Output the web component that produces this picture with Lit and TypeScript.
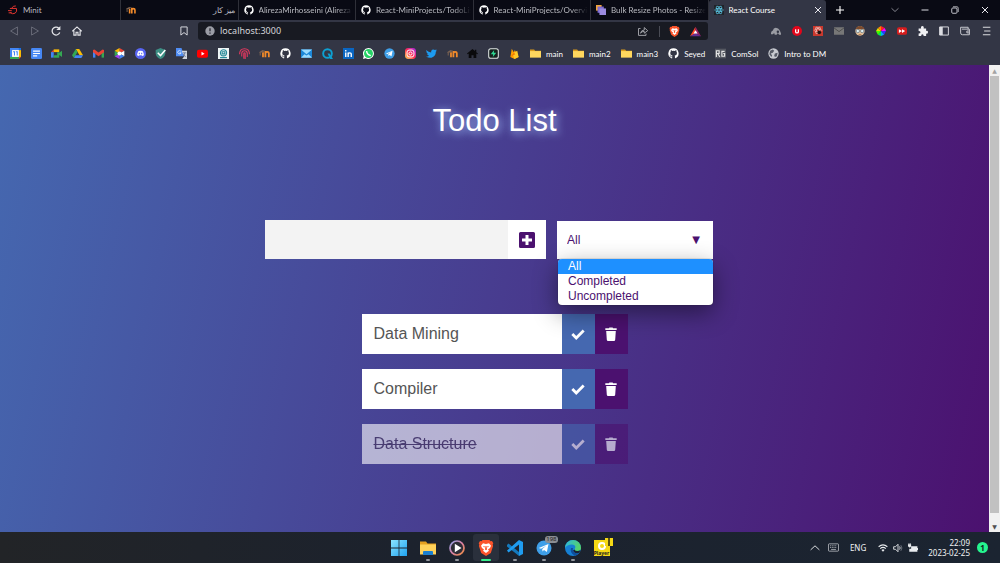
import { LitElement, html, css, svg, nothing } from "lit";
import { customElement, property, state } from "lit/decorators.js";
import { classMap } from "lit/directives/class-map.js";

const github = svg`<path fill="#fff" d="M8 .5a7.500 7.500 0 0 0-2.400 14.600c.4.1.5-.2.5-.4v-1.500c-2 .5-2.500-.9-2.500-.9-.4-.9-.9-1.100-.9-1.100-.7-.5.1-.5.1-.5.800.1 1.200.8 1.200.8.700 1.200 1.800.9 2.200.7.1-.5.3-.9.5-1.100-1.700-.2-3.400-.8-3.400-3.700 0-.8.3-1.500.8-2-.1-.2-.4-1 .1-2 0 0 .6-.2 2.100.8a7 7 0 0 1 3.800 0c1.400-1 2-.8 2-.8.5 1 .2 1.800.1 2 .5.500.8 1.200.8 2 0 2.900-1.700 3.500-3.400 3.700.3.200.5.700.5 1.400v2.100c0 .2.100.5.500.4A7.500 7.500 0 0 0 8 .5z"/>`;
const moodle = svg`<path fill="none" stroke="#f28a2a" stroke-width="2.600" d="M5.800 13.500V6M9.300 13.500V4.500M9.300 8q0-2.300 2.500-2.300t2.500 2.300v5.500"/><path fill="#7a6252" d="M0 6l5-3 4 1-4 2.500H2.500V11H1V7z"/>`;
const folder = svg`<path fill="#d99a1c" d="M0 2h6l1.500 2H16V13H0z"/><path fill="#ffd75e" d="M0 4.500h16v9.500H0z"/>`;
const brave = svg`<path fill="#fb542b" d="M4.500 0h7l1 1.300 1.500-.2 1.300 2.200-.6 1.300.4 1.300-2.300 7L8 16l-4.800-3.100-2.300-7 .4-1.300L.700 3.300 2 1.100l1.500.2z"/><path fill="#fff" d="M5 3.200l3 .7 3-.7 2 2.500-1 2.300-2 1.600 1 1.100L8 13l-3-2.300 1-1.100L4 8 3 5.700z"/><path fill="#fb542b" d="M5 6l2 .5-.8 1zM11 6l-2 .5.800 1zM7.500 6h1l.5 3.500-1 .7-1-.7z"/>`;
const telegram = svg`<circle cx="8" cy="8" r="7.500" fill="#3f9fe8"/><path fill="#fff" d="M2.800 8L12.500 4l-1.600 8-2.900-2-1.500 1.500L6.200 9l4-3.200L5 8.800z"/>`;

const icons: Record<string, unknown> = {
  github, moodle, folder, brave, telegram,
  minit: svg`<g fill="none" stroke="#e0352f" stroke-width="1.600"><path d="M3 5.500h10.500q1.500 5-2 7.500-4 2.500-8-1"/><path d="M6 5Q8 1 12.500 1.500M0 9h6M1 12.500h5"/></g>`,
  resize: svg`<path fill="#f2a53c" d="M0 0h9v9H0z"/><path fill="#7d6bd0" d="M2.500 2.500h10v10h-10z"/><path fill="#9b8ae0" d="M5.500 5.500H16V16H5.500z"/>`,
  react: svg`<path fill="#20232a" d="M0 0h16v16H0z"/><g fill="none" stroke="#61dafb"><ellipse cx="8" cy="8" rx="7" ry="2.700"/><ellipse cx="8" cy="8" rx="7" ry="2.700" transform="rotate(60 8 8)"/><ellipse cx="8" cy="8" rx="7" ry="2.700" transform="rotate(120 8 8)"/></g><circle cx="8" cy="8" r="1.300" fill="#61dafb"/>`,
  calendar: svg`<path fill="#4285f4" d="M0 0h13v3H3v10H0z"/><path fill="#fbbc04" d="M13 3h3v10h-3z"/><path fill="#1a73e8" d="M13 0h3v3h-3z"/><path fill="#34a853" d="M0 13h13v3H0z"/><path fill="#ea4335" d="M13 13h3l-3 3z"/><path fill="#fff" d="M3 3h10v10H3z"/><path fill="none" stroke="#4285f4" stroke-width="1.500" d="M4.500 5.500h2V11M8.500 5.500h2V11"/>`,
  doc: svg`<rect width="16" height="16" rx="2" fill="#4687f4"/><path stroke="#fff" stroke-width="1.700" d="M3 4.500h10M3 8h10M3 11.500h6"/>`,
  meet: svg`<path fill="#ea4335" d="M0 6l4-4v4z"/><path fill="#fbbc04" d="M4 2h8v4H4z"/><path fill="#4285f4" d="M0 6h4v8H0z"/><path fill="#34a853" d="M4 10.500h5V6h3v8H4zM12 7l4-3v9l-4-3z"/>`,
  drive: svg`<path fill="#fbbc04" d="M5.500 1.500h5L16 10.500h-5z"/><path fill="#34a853" d="M5.500 1.500L8 5.800 2.800 14.500 0 10.500z"/><path fill="#4285f4" d="M5 10.500h11l-2.500 4H2.800z"/>`,
  gmail: svg`<path fill="#4285f4" d="M0 4h3.500v10H0z"/><path fill="#34a853" d="M12.500 4H16v10h-3.500z"/><path fill="#ea4335" d="M0 3l2-1 6 4.500L14 2l2 1v3l-8 6-8-6z"/>`,
  photos: svg`<path fill="#ea4335" d="M8 0l7 4-7 4z"/><path fill="#fff" d="M15 4v8L8 8z"/><path fill="#4285f4" d="M15 12l-7 4V8z"/><path fill="#a142f4" d="M8 16l-7-4 7-4z"/><path fill="#34a853" d="M1 12V4l7 4z"/><path fill="#fbbc04" d="M1 4l7-4v8z"/><circle cx="8" cy="8" r="3" fill="#fff"/>`,
  discord: svg`<circle cx="8" cy="8" r="8" fill="#5865f2"/><path fill="#fff" d="M5 4.500q3-1 6 0 2 3 2 6l-2.500 1-1-1h-3l-1 1-2.500-1q0-3 2-6z"/><path fill="#5865f2" d="M5.500 7H7v2H5.500zM9 7h1.500v2H9z"/>`,
  shield: svg`<path fill="#3d8f84" d="M8 0l7 3v5q-1 6-7 8-6-2-7-8V3z"/><path fill="none" stroke="#fff" stroke-width="2.200" d="M4 7l4 4 7-8"/>`,
  translate: svg`<path fill="#4f8df5" d="M0 0h8l4 12H0z"/><path fill="#cfd4de" d="M8 4h8v12H9l3-4z"/><path fill="none" stroke="#fff" d="M7 4.500a2.500 2.500 0 1 0 .5 2.500H5"/><path stroke="#54668d" fill="none" d="M10 7h5M12.500 7q0 3-2 5M11 9l3 4"/>`,
  youtube: svg`<rect y="2.500" width="16" height="11.500" rx="2.500" fill="#f00"/><path fill="#fff" d="M6.500 5.500l4.500 2.700-4.500 2.800z"/>`,
  seal: svg`<path fill="#eef5f6" d="M0 0h16v16H0z"/><g fill="none" stroke="#278a99" stroke-width="1.600"><circle cx="8" cy="7" r="4.500"/><path d="M6 5.500h4v3H6zM3 14h10"/></g>`,
  fingerprint: svg`<g fill="none" stroke="#e0385f" stroke-width="1.600"><path d="M.8 9q0-8 7.200-8t7.200 8M4 12.500V8q0-4 4-4t4 4v5M7 15.500V8q0-1 1-1t1 1v8"/></g>`,
  mail: svg`<path fill="#1b87d8" d="M0 2h16v12H0z"/><path fill="#9bdcff" d="M0 2h16L8 9zM0 14l5-5 3 2 3-2 5 5z"/>`,
  quick: svg`<circle cx="8" cy="8" r="6.300" fill="none" stroke="#0da0d2" stroke-width="2.800"/><path fill="#0da0d2" d="M8 8h3l5 8h-4z"/>`,
  linkedin: svg`<path fill="#0a66c2" d="M0 0h16v16H0z"/><path fill="none" stroke="#fff" stroke-width="2" d="M4 6.500V13M4 3v2M7.500 13V6.500M7.500 9q0-2 2.300-2T12 9v4"/>`,
  whatsapp: svg`<path fill="#fff" d="M8 0a8 8 0 1 1-4 15l-4 1 1-4A8 8 0 0 1 8 0z"/><circle cx="8" cy="8" r="6.500" fill="#25d366"/><path fill="none" stroke="#fff" stroke-width="2" d="M5.300 4.500q0 5 6 6.500"/>`,
  instagram: svg`<defs><linearGradient id="ig" x1="0" y1="1" x2="1" y2="0"><stop stop-color="#fd5"/><stop offset=".5" stop-color="#ff2a55"/><stop offset="1" stop-color="#a02af0"/></linearGradient></defs><rect width="16" height="16" rx="5" fill="url(#ig)"/><g fill="none" stroke="#fff" stroke-width="1.400"><rect x="3" y="3" width="10" height="10" rx="3"/><circle cx="8" cy="8" r="2.300"/></g>`,
  twitter: svg`<path fill="#1d9bf0" d="M0 3q4 3.500 7.500 3.500Q7 2.500 10.500 2q1.500 0 2.500 1l2.500-.8L14.300 4l1.700-.4-1.700 2q0 7-6.300 8.400-4 .8-8-1.500 3 0 4.500-1.300Q2 10.500 1.700 8.800h1.300Q.5 7.500.8 5.500z"/>`,
  home2: svg`<path fill="#0a0a0c" d="M8 1.500L0 8l1 1 1.500-1v6.500h4v-4h3v4h4V8L15 9l1-1-2.500-2V2.500h-2v2z"/>`,
  bolt: svg`<rect x="1" y="1" width="14" height="14" rx="3" fill="#15201d" stroke="#dfe5e3" stroke-width="1.500"/><path fill="#2fd893" d="M9 3L4 9h3.500L7 13l5-6H8.500z"/>`,
  firebase: svg`<path fill="#ffa000" d="M2 13L4 1l3 5 1.500-3 5.500 10-6 3z"/><path fill="#ffca28" d="M5 8l7-4 2 9-6 3z"/><path fill="#f57c00" d="M2 13l5-7 2 3z"/>`,
  rg: svg`<path fill="#555861" d="M0 1h16v14H0z"/><path fill="none" stroke="#e5e5e5" stroke-width="1.700" d="M2 13V4h4v4H2m2 0l3 5M14 5h-4v7h4V8h-2"/>`,
  globe: svg`<circle cx="8" cy="8" r="7.500" fill="#c7cad0"/><path fill="#555a66" d="M3 4l4-2 2 2-2 3-3 1 2 3-1 2-3-4zM10 8l4-1-1 5-3 1-1-2z"/>`,
  tri: svg`<path fill="none" stroke="#6c6e7b" stroke-width="1.500" d="M13.500 1.500v13L2.500 8z"/>`,
  triRight: svg`<path fill="none" stroke="#6c6e7b" stroke-width="1.500" d="M2.500 1.500v13L13.500 8z"/>`,
  reload: svg`<path fill="none" stroke="#e5e6ea" stroke-width="2" d="M14 10.500A6.300 6.300 0 1 1 12.500 3.500"/><path fill="#e5e6ea" d="M15 0v6.500H8.500z"/>`,
  home: svg`<path fill="none" stroke="#e5e6ea" stroke-width="1.800" d="M.5 8.500L8 1.500l7.500 7M3 7v7.500h3.500v-4.500h3v4.500H13V7"/>`,
  bookmark: svg`<path fill="none" stroke="#d5d6dc" stroke-width="1.600" d="M3 1.500h10v13L8 10.500l-5 4z"/>`,
  info: svg`<circle cx="8" cy="8" r="7.500" fill="#9b9da5"/><path stroke="#24262f" stroke-width="2" d="M8 3.500v5M8 10.500v2"/>`,
  share: svg`<path fill="none" stroke="#a5a6ac" stroke-width="1.500" d="M4 4H.8v11h12v-3M4 11.500q1-5 6-5V2.500l5.500 5-5.500 4V8.500q-4 0-6 3z"/>`,
  bat: svg`<path fill="#ff4724" d="M8 1L0 15l8-4z"/><path fill="#9e1f63" d="M8 1l8 14-8-4z"/><path fill="#662d91" d="M0 15h16l-8-5z"/><path fill="#fff" d="M8 6l3 5H5z"/>`,
  cloud: svg`<path fill="#9a9ca3" d="M0 11q0-3 3-4 1-5 6-4 5 1 7 9v2h-3l-2-3-2 3H6l-1-3-2 2H0z"/><circle cx="11" cy="9" r="2" fill="#333645"/>`,
  ublock: svg`<circle cx="8" cy="8" r="8" fill="#e2061b"/><path fill="none" stroke="#fff" stroke-width="2" d="M5.800 5v4q0 2 2.200 2t2.200-2V5"/>`,
  bug: svg`<path fill="#c9382d" d="M0 0h16v16H0z"/><g fill="none" stroke="#f3c8c3"><ellipse cx="8" cy="7" rx="6" ry="2.500"/><ellipse cx="8" cy="7" rx="6" ry="2.500" transform="rotate(60 8 7)"/><ellipse cx="8" cy="7" rx="6" ry="2.500" transform="rotate(120 8 7)"/></g><circle cx="10" cy="10" r="3" fill="#20110f"/>`,
  mail2: svg`<path fill="#777" d="M0 2h16v12H0z"/><path fill="none" stroke="#4c4c4c" stroke-width="1.500" d="M0 3l8 6 8-6"/>`,
  face: svg`<circle cx="8" cy="8" r="7.500" fill="#e4c09a"/><path fill="#7c4a2c" d="M1 5q2-5 7-5t7 5z"/><g fill="#dff1f5" stroke="#567"><circle cx="4.500" cy="8" r="2.700"/><circle cx="11.500" cy="8" r="2.700"/></g><path fill="#a8693f" d="M5 13h6l-3 2z"/>`,
  wheel: svg`<path fill="#f22" d="M8 8V0l6 3z"/><path fill="#f0f" d="M8 8l6-5 2 5z"/><path fill="#33f" d="M8 8h8l-3 6z"/><path fill="#0af" d="M8 8l5 6-5 2z"/><path fill="#0e5" d="M8 8v8l-5-2z"/><path fill="#4f0" d="M8 8l-5 6-3-6z"/><path fill="#dd0" d="M8 8H0l3-5z"/><path fill="#f80" d="M8 8L3 3l5-3z"/>`,
  video: svg`<rect y="2" width="16" height="12" rx="3" fill="#d71d1d"/><path fill="#fff" d="M3 5l5 3-5 3zM8 5l5 3-5 3z"/>`,
  puzzle: svg`<path fill="#f0f0f3" d="M1 4h4q-1-4 2-4t2 4h4v4q3-1 3 2t-3 2v4H9q0-3-2-3t-2 3H1v-4q3 0 3-2T1 8z"/>`,
  panel: svg`<path fill="none" stroke="#dcdde2" stroke-width="1.500" d="M1 1.500h14v13H1z"/><path fill="#dcdde2" d="M1 1.500h5v13H1z"/>`,
  wallet: svg`<path fill="none" stroke="#cfd0d6" stroke-width="1.500" d="M13 5V2H1v9q0 3 3 3h11V5H3M15 8h-4v3h4"/>`,
  menu: svg`<path stroke="#e5e6ea" stroke-width="1.500" d="M3 2h12M5 8h10M3 14h12"/>`,
  close: svg`<path stroke="#e8e8ee" stroke-width="2" d="M2 2l12 12M14 2L2 14"/>`,
  plus: svg`<path stroke="#fff" stroke-width="2.200" d="M8 0v16M0 8h16"/>`,
  chevDown: svg`<path fill="none" stroke="#a9aab3" stroke-width="1.500" d="M1 4.500l7 6.500 7-6.500"/>`,
  chevUp: svg`<path fill="none" stroke="#e5e7ea" stroke-width="1.500" d="M1 11l7-6.500 7 6.500"/>`,
  minimise: svg`<path stroke="#e8e8ee" stroke-width="1.900" d="M1 8h14"/>`,
  restore: svg`<rect x="1.500" y="4" width="10.500" height="10.500" rx="2" fill="none" stroke="#d5d5dc" stroke-width="1.800"/><path fill="none" stroke="#d5d5dc" stroke-width="1.500" d="M4 1.500h8q2.500 0 2.500 3V12"/>`,
  square: svg`<path fill="#4b116f" fill-rule="evenodd" d="M1.500 0h13q1.500 0 1.500 1.500v13q0 1.500-1.500 1.500h-13Q0 16 0 14.500v-13Q0 0 1.500 0zM6.500 3v3.500H3v3h3.500V13h3V9.500H13v-3H9.500V3z"/>`,
  check: svg`<path fill="none" stroke="#fff" stroke-width="3.200" d="M1.500 8l4.500 4.500L14.500 4"/>`,
  trash: svg`<path fill="#fff" d="M1.500 1.500h4L6.200.5h3.600l.7 1h4v2h-13zM2.500 4.500h11l-.7 10q-.1 1.500-1.500 1.500H4.700q-1.400 0-1.500-1.500z"/>`,
  windows: svg`<defs><linearGradient id="wn" x2="1" y2="1"><stop stop-color="#8be4ff"/><stop offset="1" stop-color="#1ea2f0"/></linearGradient></defs><path fill="url(#wn)" d="M0 0h7.600v7.600H0zM8.400 0H16v7.600H8.400zM0 8.400h7.600V16H0zM8.400 8.400H16V16H8.400z"/>`,
  explorer: svg`<path fill="#e5a01f" d="M0 1.500h6l1.500 2H16V8H0z"/><path fill="#ffd25a" d="M0 4.500h16v10H0z"/><path fill="#1a7fd0" d="M3 15v-3q0-1 1-1h8q1 0 1 1v3z"/>`,
  media: svg`<defs><linearGradient id="md" x2="1" y2="1"><stop stop-color="#8ba2e8"/><stop offset=".5" stop-color="#d77fa4"/><stop offset="1" stop-color="#ef8c3c"/></linearGradient></defs><circle cx="8" cy="8" r="7" fill="#2c2c36" stroke="url(#md)" stroke-width="1.700"/><path fill="#fff" d="M5.800 3.800L12.500 8l-6.700 4.200z"/>`,
  vscode: svg`<path fill="#1479bd" d="M0 5l1.500-1.500L12 12v4L0 6.500z"/><path fill="#1f9cf0" d="M0 10.500L12 0l4 2v12l-4 2V4.500L1.500 12.500z"/>`,
  edge: svg`<defs><linearGradient id="ed" x2="1" y2=".3"><stop stop-color="#2cb5e0"/><stop offset="1" stop-color="#55d36b"/></linearGradient></defs><circle cx="8" cy="8" r="8" fill="#1680d4"/><path fill="url(#ed)" d="M0 8a8 8 0 0 1 16 0q0 3-3.500 3T9.500 9.500Q12 5 7 4.500 2 4.500 0 8z"/><path fill="#1b2230" d="M9.500 9.500q.5 1.500 3 1.500 2 0 3-1-.5 2-2 3.200-4 .8-5.500-2.200 0-1 1.500-1.500z"/><path fill="#0f4f9c" d="M6 8q-1.500 5 3.500 7.500 3-.5 4.500-2.500-3 1-5-1T8 8z"/>`,
  keyboard: svg`<rect x=".7" y="2.700" width="14.600" height="10.600" rx="1" fill="none" stroke="#d5d8dc"/><path stroke="#d5d8dc" stroke-dasharray="1.500 1" d="M3 5.500h10M3 8h10"/><path stroke="#d5d8dc" d="M4.500 10.800h7"/>`,
  wifi: svg`<g fill="none" stroke="#e9ecef" stroke-width="1.700"><path d="M1 6q7-6 14 0M3.500 9q4.500-4 9 0"/></g><path fill="#e9ecef" d="M5.500 11q2.500-2 5 0L8 14z"/>`,
  sound: svg`<path fill="none" stroke="#e9ecef" stroke-width="1.400" d="M1 6h3l4-4v12l-4-4H1zM10.500 5.500q2 2.500 0 5"/><path fill="none" stroke="#79808a" stroke-width="1.300" d="M12.500 3.500q3.500 4.500 0 9"/>`,
  battery: svg`<path fill="#e9ecef" d="M5 5h10v3h1v3h-1v3H2V9h3zM0 2h1V0h1v2h1V0h1v2h1v3L3.500 7H2L0 5z"/>`,
};

@customElement("ui-icon")
class UiIcon extends LitElement {
  static styles = css`
    :host { display: inline-flex; width: 10px; height: 10px; flex: none; }
    svg { width: 100%; height: 100%; display: block; }
  `;
  @property() name = "";
  render() {
    return html`<svg viewBox="0 0 16 16" aria-hidden="true">${icons[this.name] ?? nothing}</svg>`;
  }
}

@customElement("browser-chrome")
class BrowserChrome extends LitElement {
  static styles = css`
    :host { display: block; background: #333645; color: #fff; font: 8px/12px Lato, "Noto Sans", sans-serif; }
    button { border: 0; padding: 0; background: none; color: inherit; font: inherit; display: inline-flex; align-items: center; justify-content: center; }
    a { color: inherit; text-decoration: none; display: flex; align-items: center; }
    .strip { display: flex; height: 20px; background: #090a14; }
    .tabs { flex: 0 1 826px; min-width: 0; display: grid; grid-template-columns: 121px repeat(6, minmax(0, 1fr)); }
    .tab { min-width: 0; box-sizing: border-box; display: flex; align-items: center; gap: 5px; padding: 0 2px 0 5px; color: #b9bac0; border-right: 1px solid #2f3039; }
    .tab:first-child { padding-left: 8px; }
    .tab.active { background: #333645; color: #fff; border: 0; border-radius: 3px 3px 0 0; padding-right: 4px; }
    .title { flex: 1; min-width: 0; overflow: hidden; white-space: nowrap; }
    .title.fade { mask-image: linear-gradient(to right, #000 82%, transparent); }
    .title.rtl { direction: rtl; padding-left: 3px; }
    .small { width: 8px; height: 8px; }
    .new { width: 28px; }
    .window { margin-left: auto; display: flex; }
    .window button { width: 30px; }
    .bar { display: flex; align-items: center; height: 22px; }
    .nav { display: flex; padding-left: 3px; }
    .nav button { width: 21px; }
    .mark { margin-left: auto; width: 28px; }
    .address { flex: 0 1 510px; height: 18px; box-sizing: border-box; display: flex; align-items: center; gap: 5px; padding: 0 7px; border-radius: 3px; background: #181a22; }
    .url { flex: 1; min-width: 0; border: 0; padding: 0; outline: 0; background: none; color: #d5d6da; font: 9px/12px "Noto Sans", sans-serif; }
    .rule { width: 1px; height: 11px; margin: 0 4px 0 6px; background: #4a4c55; }
    .bat { margin-left: 5px; }
    .ext { margin-left: 57px; display: flex; padding-right: 4px; }
    .ext button { width: 21px; }
    .marks { display: flex; align-items: center; height: 23px; padding-left: 5px; }
    .sites { flex: 0 1 520px; display: grid; grid-template-columns: repeat(25, 1fr); justify-items: center; }
    .named { display: flex; align-items: center; gap: 10px; padding-left: 5px; }
    .named a { gap: 5px; }
    .site { width: 11px; height: 11px; }
  `;
  private tabs = [
    { icon: "minit", title: "Minit" },
    { icon: "moodle", title: "میز کار", rtl: true },
    { icon: "github", title: "AlirezaMirhosseini (Alireza" },
    { icon: "github", title: "React-MiniProjects/TodoLis" },
    { icon: "github", title: "React-MiniProjects/Overvie" },
    { icon: "resize", title: "Bulk Resize Photos - Resize" },
    { icon: "react", title: "React Course", active: true },
  ];
  private sites = ["calendar", "doc", "meet", "drive", "gmail", "photos", "discord", "shield", "translate", "youtube", "seal", "fingerprint", "moodle", "github", "mail", "quick", "linkedin", "whatsapp", "telegram", "instagram", "twitter", "moodle", "home2", "bolt", "firebase"];
  private named = [["folder", "main"], ["folder", "main2"], ["folder", "main3"], ["github", "Seyed"], ["rg", "ComSol"], ["globe", "Intro to DM"]];
  private button(name: string) {
    return html`<button aria-label=${name}><ui-icon name=${name}></ui-icon></button>`;
  }
  render() {
    return html`
      <div class="strip">
        <div class="tabs">
          ${this.tabs.map((t) => html`<div class=${classMap({ tab: true, active: !!t.active })}>
            <ui-icon name=${t.icon}></ui-icon>
            <span class=${classMap({ title: true, rtl: !!t.rtl, fade: t.title.length > 20 })}>${t.title}</span>
            ${t.active ? html`<button aria-label="Close tab"><ui-icon class="small" name="close"></ui-icon></button>` : nothing}
          </div>`)}
        </div>
        <button class="new" aria-label="New tab"><ui-icon class="small" name="plus"></ui-icon></button>
        <div class="window">
          ${["chevDown", "minimise", "restore", "close"].map((n) => html`<button aria-label=${n}><ui-icon class="small" name=${n}></ui-icon></button>`)}
        </div>
      </div>
      <div class="bar">
        <div class="nav">${["tri", "triRight", "reload", "home"].map((n) => this.button(n))}</div>
        <button class="mark" aria-label="Bookmark"><ui-icon name="bookmark"></ui-icon></button>
        <div class="address">
          <ui-icon name="info"></ui-icon>
          <input class="url" aria-label="Address" .value=${"localhost:3000"} />
          ${this.button("share")}<span class="rule"></span><ui-icon class="site" name="brave"></ui-icon><ui-icon class="site bat" name="bat"></ui-icon>
        </div>
        <div class="ext">${["cloud", "ublock", "bug", "mail2", "face", "wheel", "video", "puzzle", "panel", "wallet", "menu"].map((n) => this.button(n))}</div>
      </div>
      <div class="marks">
        <div class="sites">${this.sites.map((n) => html`<a href="#" aria-label=${n}><ui-icon class="site" name=${n}></ui-icon></a>`)}</div>
        <div class="named">${this.named.map(([i, t]) => html`<a href="#"><ui-icon class="site" name=${i}></ui-icon>${t}</a>`)}</div>
      </div>`;
  }
}

@customElement("todo-page")
class TodoPage extends LitElement {
  static styles = css`
    :host { display: flex; min-height: 0; font-family: "Liberation Sans", Arial, sans-serif; }
    .page { flex: 1; display: flex; flex-direction: column; align-items: center; background: linear-gradient(102deg, #4568b0, #4b116f); color: #fff; }
    h1 { margin: 38px 0 0; font-size: 31px; line-height: 36px; font-weight: 400; text-shadow: 2px 2px 8px #a5c4ff; }
    form { display: flex; justify-content: center; gap: 11px; margin: 81px 11px 55px 0; height: 39px; }
    button { border: 0; padding: 0; display: flex; align-items: center; justify-content: center; }
    .field { display: flex; }
    .new { width: 243px; box-sizing: border-box; border: 0; padding: 8px; background: #f3f3f3; font: 16px "Liberation Sans", sans-serif; outline: 0; }
    .add { width: 38px; background: #fff; }
    .add ui-icon { width: 16px; height: 16px; }
    .filter { position: relative; width: 156px; padding-top: 1px; box-sizing: border-box; display: grid; align-items: center; }
    .filter select, .arrow { grid-area: 1 / 1; }
    select { appearance: none; width: 100%; height: 38px; border: 0; border-radius: 0; padding: 0 10px; background: #fff; color: #4b116f; font: 12px "Liberation Sans", sans-serif; outline: 0; }
    .arrow { justify-self: end; padding-right: 13px; color: #4b116f; font: 10px/14px "DejaVu Sans", sans-serif; pointer-events: none; }
    .options { position: absolute; top: 100%; left: 1px; right: 0; z-index: 1; margin: 0; padding: 0 0 1px; list-style: none; overflow: hidden; background: #fff; border-radius: 4px; box-shadow: 0 8px 24px rgba(0, 0, 0, 0.45), 0 0 1px #222; color: #4b116f; font-size: 12px; line-height: 15px; }
    .options li { padding-left: 10px; }
    .options .on { background: #1e90ff; color: #fff; }
    .list { margin: 0; padding: 0; list-style: none; display: flex; flex-direction: column; gap: 15px; }
    .item { display: flex; height: 40px; }
    .text { width: 200px; box-sizing: border-box; padding-left: 12px; background: #fff; color: #555; font-size: 16px; line-height: 40px; }
    .item button { width: 33px; }
    .item ui-icon { width: 14px; height: 14px; }
    .done { background: #4568b0; }
    .remove { background: #4b116f; }
    .completed { opacity: 0.6; }
    .completed .text { text-decoration: line-through; color: #4a3a5c; }
    .scroll { flex: 0 0 11px; display: flex; flex-direction: column; align-items: center; justify-content: space-between; background: #f1f1f1; color: #505050; font: 6px/11px "DejaVu Sans", sans-serif; }
    .thumb { flex: 1; width: 9px; margin-bottom: 19px; background: #c1c1c1; }
    .scroll .thumb { margin-bottom: 18px; }
    .thumb + .down { margin-top: -10px; }
    .up { color: #a3a3a3; }
  `;
  @state() private filter = "All";
  @state() private todos = [
    { text: "Data Mining", done: false },
    { text: "Compiler", done: false },
    { text: "Data Structure", done: true },
  ];
  private toggle(i: number) {
    this.todos = this.todos.map((t, n) => (n === i ? { ...t, done: !t.done } : t));
  }
  private remove(i: number) {
    this.todos = this.todos.filter((_, n) => n !== i);
  }
  render() {
    const choices = ["All", "Completed", "Uncompleted"];
    return html`
      <main class="page">
        <h1>Todo List</h1>
        <form @submit=${(e: Event) => e.preventDefault()}>
          <div class="field">
            <input class="new" type="text" aria-label="New todo" />
            <button class="add" aria-label="Add todo"><ui-icon name="square"></ui-icon></button>
          </div>
          <div class="filter">
            <select aria-label="Filter todos">${choices.map((c) => html`<option ?selected=${c === this.filter}>${c}</option>`)}</select>
            <span class="arrow">▼</span>
            <ul class="options" role="listbox" aria-label="Filter options">
              ${choices.map((c) => html`<li role="option" class=${classMap({ on: c === this.filter })} @click=${() => (this.filter = c)}>${c}</li>`)}
            </ul>
          </div>
        </form>
        <ul class="list">
          ${this.todos.map((t, i) => html`<li class=${classMap({ item: true, completed: t.done })}>
            <span class="text">${t.text}</span>
            <button class="done" aria-label="Complete ${t.text}" @click=${() => this.toggle(i)}><ui-icon name="check"></ui-icon></button>
            <button class="remove" aria-label="Delete ${t.text}" @click=${() => this.remove(i)}><ui-icon name="trash"></ui-icon></button>
          </li>`)}
        </ul>
      </main>
      <div class="scroll" aria-hidden="true"><span class="up">▲</span><span class="thumb"></span><span class="down">▼</span></div>`;
  }
}

@customElement("task-bar")
class TaskBar extends LitElement {
  static styles = css`
    :host { display: grid; grid-template-columns: 1fr auto 1fr; height: 31px; background: linear-gradient(to right, #222427, #1c222d 40%, #1b2431); color: #f0f2f4; font: 8px/10px "Noto Sans", sans-serif; }
    button { border: 0; padding: 0; background: none; color: inherit; font: inherit; }
    .apps { grid-column: 2; display: flex; align-items: center; gap: 3px; }
    .app { position: relative; width: 26px; height: 27px; display: flex; align-items: center; justify-content: center; border-radius: 3px; }
    .app ui-icon { width: 16px; height: 16px; }
    .app.active { background: #2a303c; }
    .app.open::after { content: ""; position: absolute; bottom: 0; width: 4px; height: 2px; border-radius: 1px; background: #92969d; }
    .app.active::after { width: 10px; background: #35f08c; }
    .count { position: absolute; top: 2px; right: -1px; padding: 0 1px; border-radius: 3px; background: #8b8e93; color: #222; font-size: 6px; line-height: 7px; }
    .player { position: relative; width: 16px; height: 16px; background: #f6d915; color: #222; font: 700 5px/6px "Noto Sans", sans-serif; display: flex; flex-direction: column; align-items: center; justify-content: flex-end; }
    .player::before { content: ""; width: 4px; height: 4px; border: 2px solid #fff; border-radius: 50%; }
    .pause { position: absolute; top: -2px; right: -3px; width: 2px; height: 8px; border: solid #f6d915; border-width: 0 3px; background: #5b5210; }
    .tray { display: flex; align-items: center; justify-content: flex-end; padding-right: 12px; }
    .lang { margin: 0 12px 0 11px; }
    .keys { width: 11px; height: 11px; margin-left: 8px; }
    .status { display: flex; gap: 5px; }
    .clock { margin: 0 7px 0 10px; text-align: right; }
    .badge { width: 11px; height: 11px; border-radius: 50%; background: #25f58f; color: #10261b; text-align: center; line-height: 11px; font-weight: 700; }
  `;
  private apps = ["windows", "explorer", "media", "brave", "vscode", "telegram", "edge", "player"];
  render() {
    return html`
      <nav class="apps">
        ${this.apps.map((a) => html`<button aria-label=${a} class=${classMap({ app: true, active: a === "brave", open: a !== "windows" && a !== "player" })}>
          ${a === "player" ? html`<span class="player">Player<i class="pause"></i></span>` : html`<ui-icon name=${a}></ui-icon>`}
          ${a === "telegram" ? html`<span class="count">198</span>` : nothing}
        </button>`)}
      </nav>
      <div class="tray">
        <ui-icon name="chevUp"></ui-icon>
        <ui-icon class="keys" name="keyboard"></ui-icon>
        <span class="lang">ENG</span>
        <span class="status"><ui-icon name="wifi"></ui-icon><ui-icon name="sound"></ui-icon><ui-icon name="battery"></ui-icon></span>
        <time class="clock">22:09<br />2023-02-25</time>
        <span class="badge">1</span>
      </div>`;
  }
}

@customElement("app-root")
class AppRoot extends LitElement {
  static styles = css`
    :host { display: grid; grid-template-rows: auto 1fr auto; height: 100vh; overflow: hidden; }
  `;
  render() {
    return html`<browser-chrome></browser-chrome><todo-page></todo-page><task-bar></task-bar>`;
  }
}
